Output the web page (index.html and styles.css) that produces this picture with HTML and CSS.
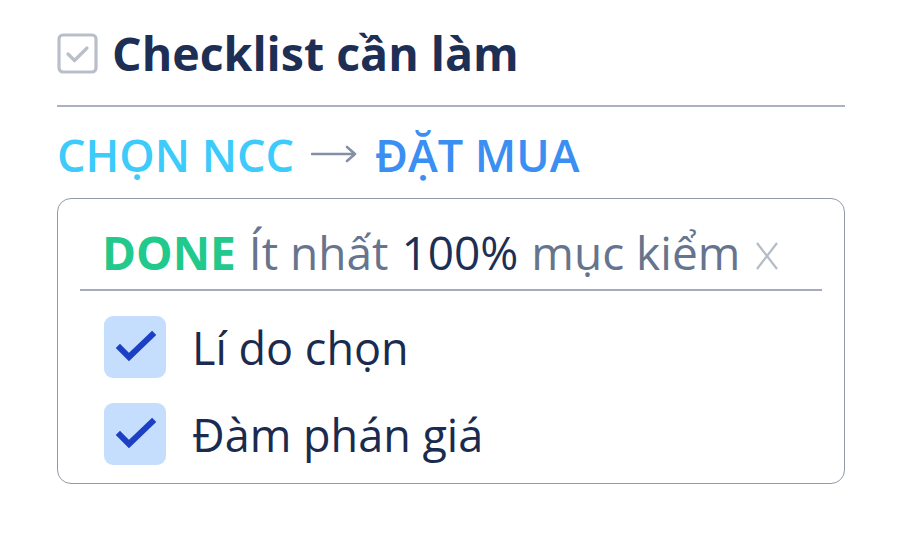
FILE: index.html
```html
<!DOCTYPE html>
<html lang="vi">
<head>
<meta charset="utf-8">
<link rel="stylesheet" href="styles.css">
</head>
<body>
<div class="panel">
  <div class="title">
    <svg class="title-icon" width="41" height="41" viewBox="0 0 41 41">
      <rect x="2" y="2" width="37" height="37" rx="4" fill="none" stroke="#b9bfca" stroke-width="3.2"/>
      <path d="M11 21 L17.5 27.5 L30 15" fill="none" stroke="#b9bfca" stroke-width="3.2" stroke-linecap="round" stroke-linejoin="round"/>
    </svg>
    <h1 class="title-text">Checklist cần làm</h1>
  </div>
  <div class="divider"></div>
  <div class="stage">
    <span class="stage-from">CHỌN NCC</span>
    <svg class="stage-arrow" width="47" height="20" viewBox="0 0 47 20">
      <path d="M1 10 H44 M36 3 L44 10 L36 17" fill="none" stroke="#8390a6" stroke-width="2.6" stroke-linecap="round" stroke-linejoin="round"/>
    </svg>
    <span class="stage-to">ĐẶT MUA</span>
  </div>
  <div class="card">
    <div class="card-head">
      <span class="done">DONE</span>
      <span class="muted">Ít nhất</span>
      <span class="strong">100%</span>
      <span class="muted">mục kiểm</span>
      <svg class="close" width="24" height="28" viewBox="0 0 24 28">
        <path d="M2 1 L22 27 M22 1 L2 27" fill="none" stroke="#b4bcc7" stroke-width="2.2"/>
      </svg>
    </div>
    <div class="items">
      <div class="item">
        <span class="box">
          <svg width="62" height="62" viewBox="0 0 62 62"><path d="M16 32 L25 41 L48 19" fill="none" stroke="#1c3fc4" stroke-width="6" stroke-linecap="square" stroke-linejoin="miter"/></svg>
        </span>
        <span class="item-text">Lí do chọn</span>
      </div>
      <div class="item">
        <span class="box">
          <svg width="62" height="62" viewBox="0 0 62 62"><path d="M16 32 L25 41 L48 19" fill="none" stroke="#1c3fc4" stroke-width="6" stroke-linecap="square" stroke-linejoin="miter"/></svg>
        </span>
        <span class="item-text">Đàm phán giá</span>
      </div>
    </div>
  </div>
</div>
</body>
</html>
```
FILE: styles.css
```css
* { box-sizing: border-box; }
html, body { margin: 0; padding: 0; background: #ffffff; }
body { font-family: "Open Sans", "Noto Sans", sans-serif; color: #1b2b4f; }

.panel {
  width: 788px;
  margin-left: 57px;
  padding-top: 22px;
}

.title {
  display: flex;
  align-items: center;
  gap: 14px;
  height: 62px;
}
.title-icon { flex: none; }
.title-text {
  margin: 0;
  font-size: 46.5px;
  font-weight: 700;
  color: #1e2f55;
  line-height: 1;
}

.divider {
  height: 2px;
  background: #aab2bf;
  margin-top: 21px;
}

.stage {
  margin-top: 18px;
  font-size: 45px;
  font-weight: 600;
  line-height: 60px;
  height: 60px;
  display: flex;
  gap: 17px;
  align-items: center;
}
.stage-from { color: #3ccbfa; }
.stage-arrow { flex: none; margin-top: -2px; }
.stage-to { color: #3b8ef2; }

.card {
  margin-top: 13px;
  border: 1.5px solid #8f9aab;
  border-radius: 14px;
  padding: 0 22px 18px 22px;
}

.card-head {
  display: flex;
  align-items: baseline;
  gap: 13px;
  font-size: 46px;
  line-height: 61px;
  padding: 23px 0 6px 22px;
  border-bottom: 2px solid #a3acba;
}
.done { color: #22c98c; font-weight: 700; }
.muted { color: #66748d; }
.strong { color: #1e2f55; }
.close { flex: none; margin: 0 0 4px 2px; }

.items {
  padding-top: 25px;
  padding-left: 24px;
  display: flex;
  flex-direction: column;
  gap: 25px;
}
.item {
  display: flex;
  align-items: center;
  gap: 26px;
}
.box {
  width: 62px;
  height: 62px;
  border-radius: 9px;
  background: #c6defd;
  flex: none;
  display: flex;
}
.item-text {
  font-size: 45px;
  color: #1b2b4f;
  line-height: 1;
}
```
